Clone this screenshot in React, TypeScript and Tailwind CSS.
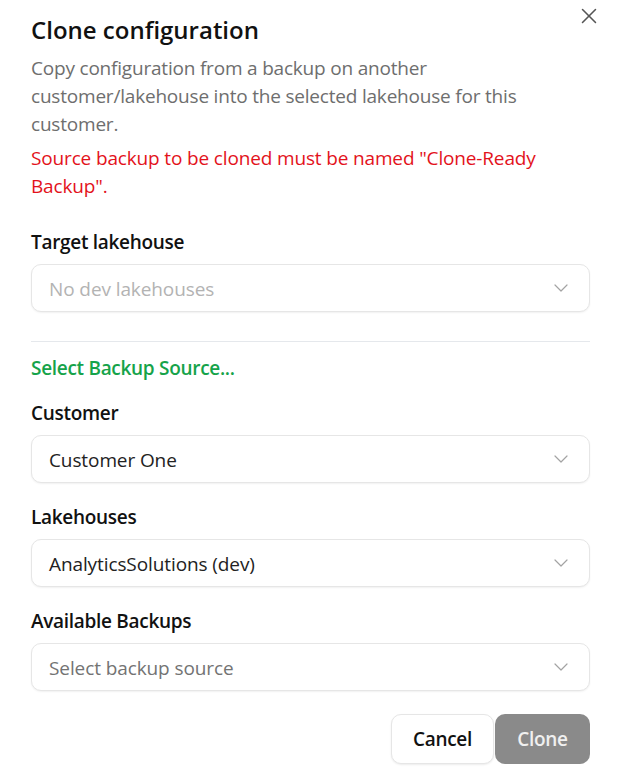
import React from 'react';
import { ChevronDown, X } from 'lucide-react';

const font = { fontFamily: '"Open Sans", "Noto Sans", sans-serif' };

interface SelectBoxProps {
  value: string;
  tone: 'value' | 'placeholder' | 'disabled';
}

const SelectBox = ({ value, tone }: SelectBoxProps) => {
  const color =
    tone === 'value' ? 'text-[#222222]' : tone === 'placeholder' ? 'text-[#737373]' : 'text-[#b3b3b3]';
  return (
    <div className="flex h-12 items-center justify-between rounded-[10px] border border-[#e6e6e6] bg-white pl-[17px] pr-[16px] shadow-[0_1px_2px_rgba(0,0,0,0.06)]">
      <span className={`pt-[2px] text-[19px] tracking-[-0.1px] ${color}`}>{value}</span>
      <ChevronDown className="h-[24px] w-[24px] text-[#a3a3a3]" strokeWidth={1.2} />
    </div>
  );
};

const Label = ({ children }: { children: React.ReactNode }) => (
  <div className="text-[19px] font-semibold leading-[28px] tracking-[-0.3px] text-[#111111]">{children}</div>
);

export default function App() {
  return (
    <div style={font} className="relative min-h-[776px] w-[621px] bg-white px-[31px] pt-[14px]">
      <button className="absolute right-[19px] top-[3px] flex h-[26px] w-[26px] items-center justify-center text-[#555555]">
        <X className="h-[26px] w-[26px]" strokeWidth={1.4} />
      </button>

      <h2 className="text-[24px] font-semibold leading-[32px] text-[#111111]">Clone configuration</h2>
      <p className="mt-[8px] text-[19px] leading-[28px] tracking-[-0.2px] text-[#6e6e6e]">
        Copy configuration from a backup on another customer/lakehouse into the selected lakehouse for this
        customer.
      </p>
      <p className="mt-[6px] text-[19px] leading-[28px] tracking-[-0.15px] text-[#e3121b]">
        Source backup to be cloned must be named "Clone-Ready Backup".
      </p>

      <div className="mt-[28px]">
        <Label>Target lakehouse</Label>
        <div className="mt-[8px]">
          <SelectBox value="No dev lakehouses" tone="disabled" />
        </div>
      </div>

      <div className="mt-[29px] h-px bg-[#e5e8ec]" />

      <div className="mt-[12px] text-[19px] font-semibold leading-[28px] tracking-[-0.3px] text-[#16a34a]">
        Select Backup Source...
      </div>

      <div className="mt-[17px] flex flex-col gap-[20px]">
        <div>
          <Label>Customer</Label>
          <div className="mt-[8px]">
            <SelectBox value="Customer One" tone="value" />
          </div>
        </div>
        <div>
          <Label>Lakehouses</Label>
          <div className="mt-[8px]">
            <SelectBox value="AnalyticsSolutions (dev)" tone="value" />
          </div>
        </div>
        <div>
          <Label>Available Backups</Label>
          <div className="mt-[8px]">
            <SelectBox value="Select backup source" tone="placeholder" />
          </div>
        </div>
      </div>

      <div className="mt-[23px] flex justify-end gap-[1px]">
        <button className="h-[50px] w-[103px] rounded-[10px] border border-[#e6e6e6] bg-white text-[19px] font-semibold tracking-[-0.3px] text-[#111111] shadow-[0_1px_2px_rgba(0,0,0,0.08)]">
          Cancel
        </button>
        <button className="h-[50px] w-[95px] rounded-[10px] bg-[#8a8a8a] text-[19px] font-semibold tracking-[-0.3px] text-[#f0f0f0]">
          Clone
        </button>
      </div>
    </div>
  );
}
